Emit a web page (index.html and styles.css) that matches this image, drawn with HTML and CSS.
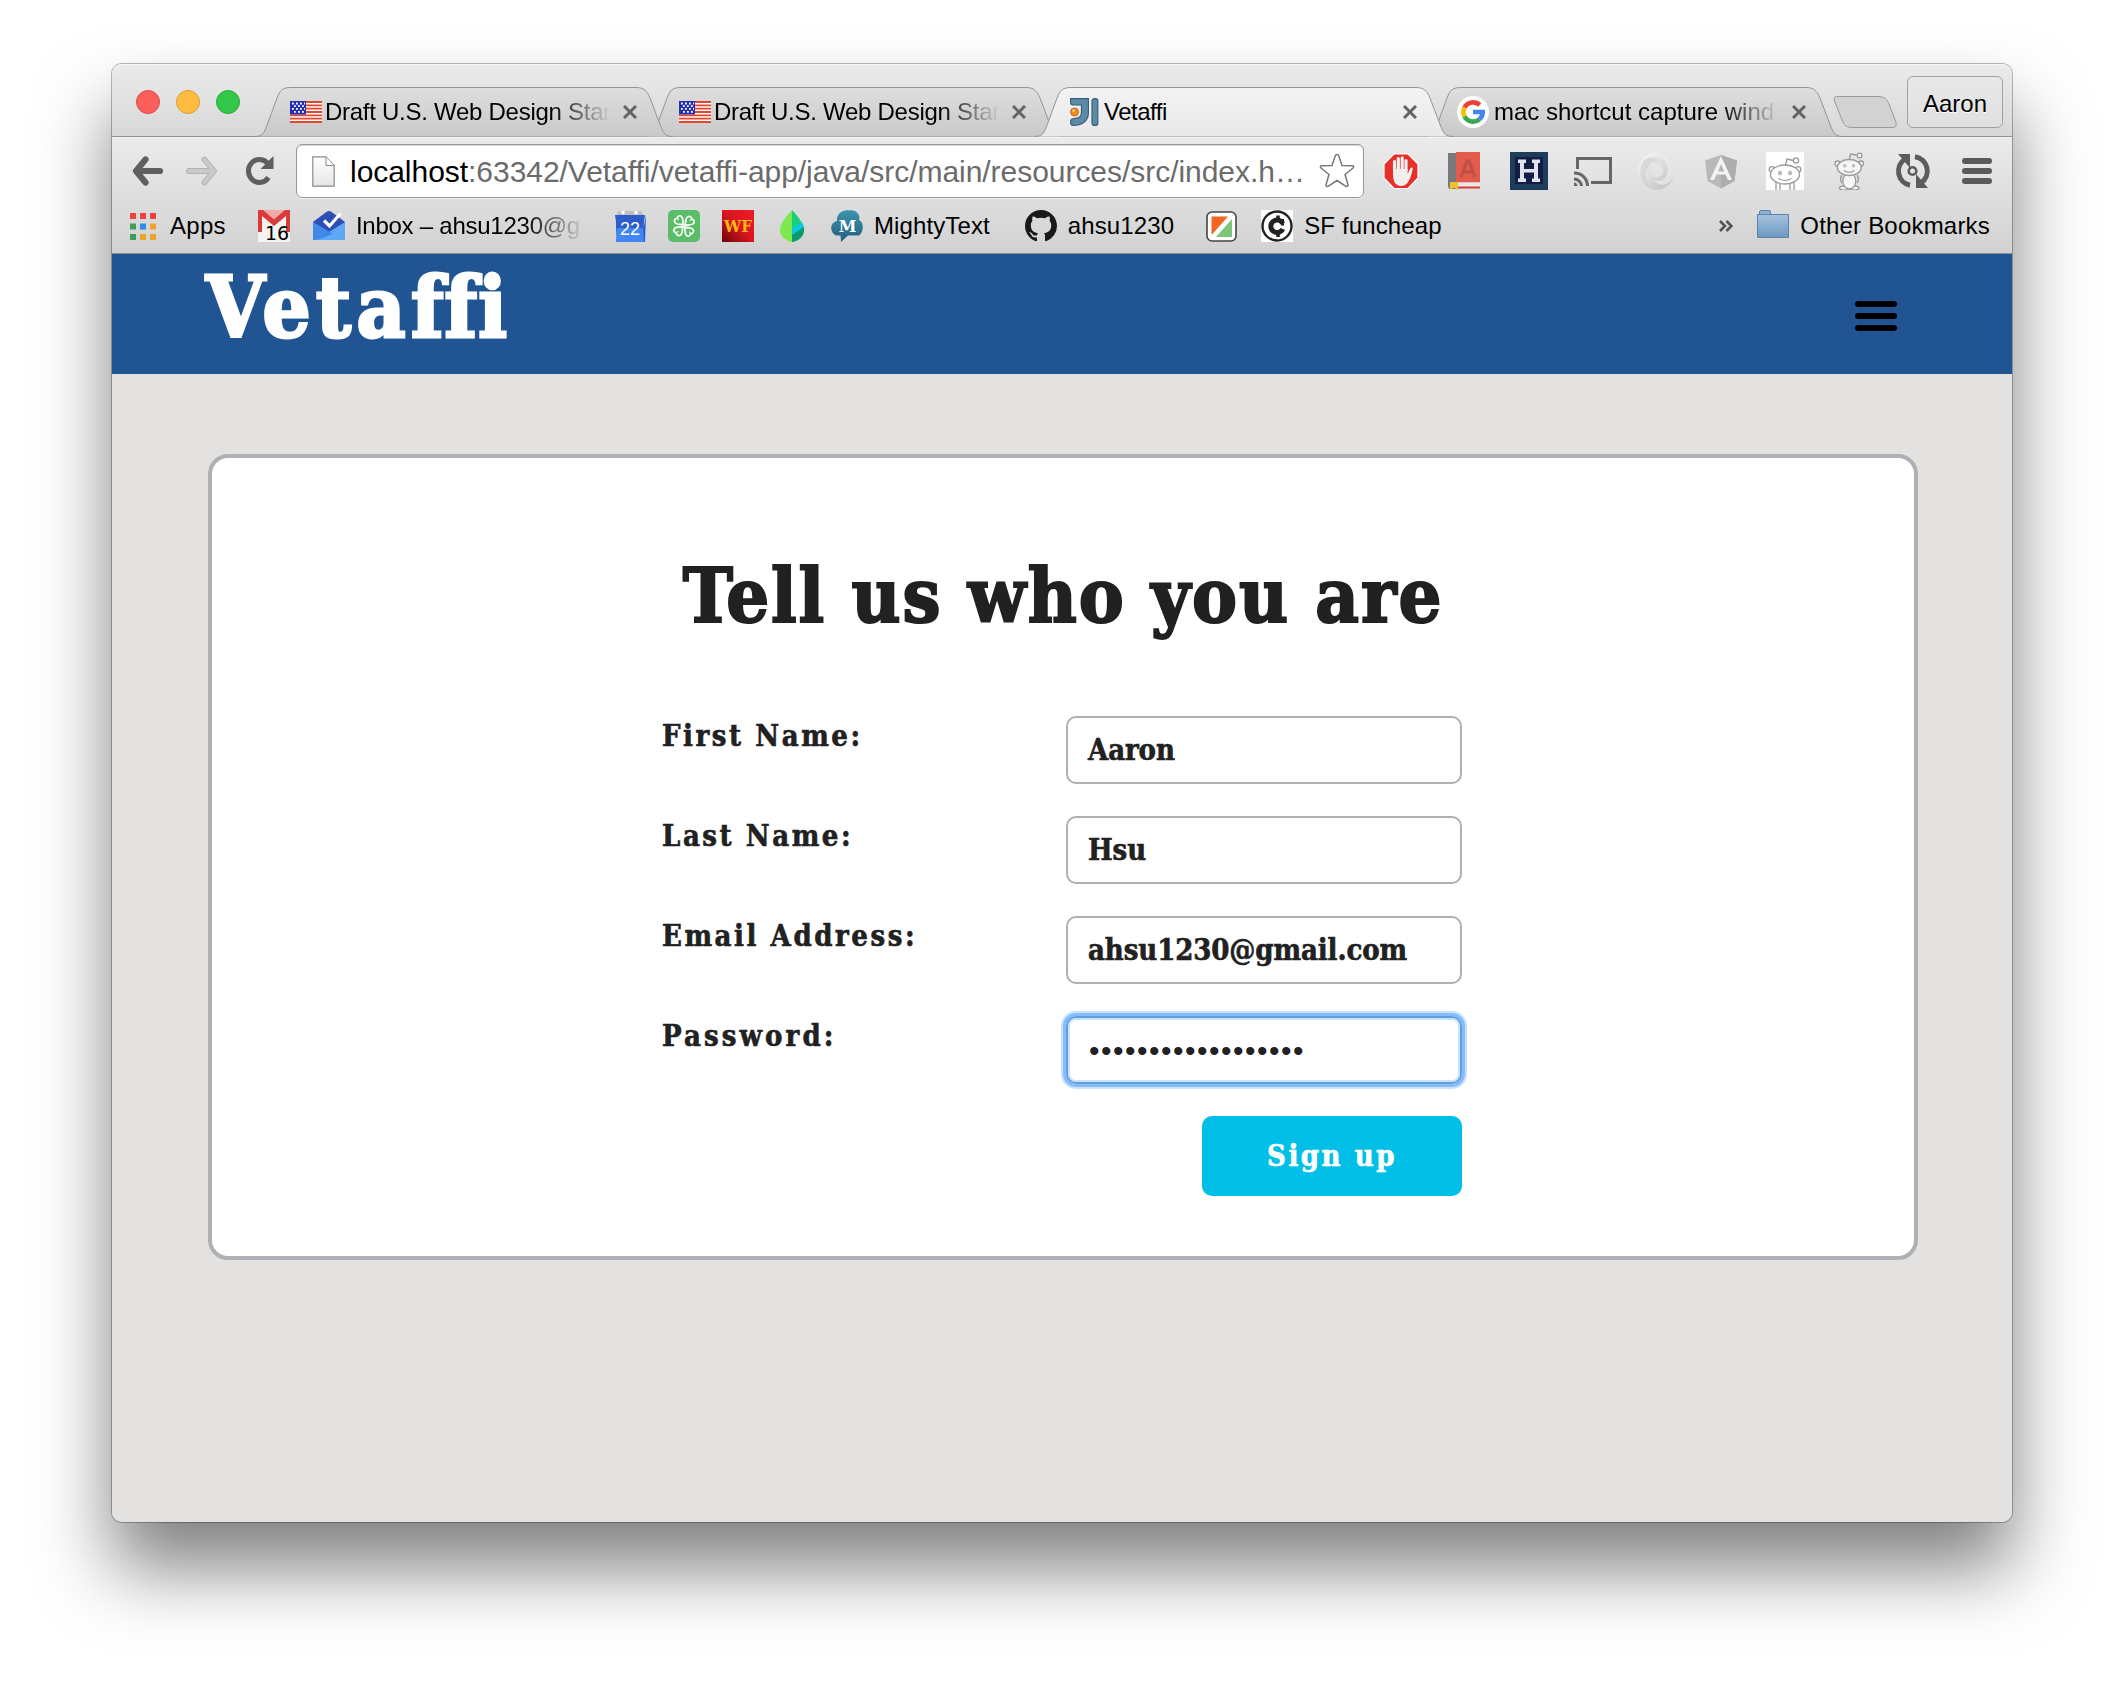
FILE: index.html
```
<!DOCTYPE html>
<html lang="en">
<head>
<meta charset="utf-8">
<title>Vetaffi</title>
<link rel="stylesheet" href="styles.css">
</head>
<body>
<svg class="defs" width="0" height="0" aria-hidden="true">
  <defs>
    <linearGradient id="tabFill" x1="0" y1="0" x2="0" y2="1"><stop offset="0" stop-color="#dedede"/><stop offset="1" stop-color="#c9c9ca"/></linearGradient>
    <linearGradient id="activeFill" x1="0" y1="0" x2="0" y2="1"><stop offset="0" stop-color="#f3f3f3"/><stop offset="1" stop-color="#e9e9e9"/></linearGradient>
    <linearGradient id="folderFill" x1="0" y1="0" x2="0" y2="1"><stop offset="0" stop-color="#a5c2dd"/><stop offset="1" stop-color="#6d99c4"/></linearGradient>
    <linearGradient id="wfFill" x1="1" y1="0" x2="0" y2="1"><stop offset="0" stop-color="#ee1c25"/><stop offset=".5" stop-color="#d8161f"/><stop offset="1" stop-color="#6d0208"/></linearGradient>
    <linearGradient id="cloudFill" x1="0" y1="0" x2="0" y2="1"><stop offset="0" stop-color="#3d93ad"/><stop offset="1" stop-color="#245d80"/></linearGradient>
    <linearGradient id="ringFill" x1="0" y1="0" x2="1" y2="1"><stop offset="0" stop-color="#f0f0f0"/><stop offset="1" stop-color="#c6c6c6"/></linearGradient>
    <linearGradient id="pageFill" x1="0" y1="0" x2="0" y2="1"><stop offset="0" stop-color="#fff"/><stop offset="1" stop-color="#e6e6e6"/></linearGradient>
    <symbol id="tabShape" viewBox="0 0 418 50"><path d="M0 49.500C7 49.500 9 46 11 41L22 11C25 3 28 .5 36 .5H381C389 .5 392 4 395 11L406 40C409 47 411 49.500 418 49.500"/></symbol>
    <symbol id="flag" viewBox="0 0 32 22"><path fill="#fff" d="M0 0h32v22H0z"/><path stroke="#e2462c" stroke-width="1.800" d="M0 1h32M0 4.400h32M0 7.700h32M0 11h32M0 14.400h32M0 17.700h32M0 21h32"/><path fill="#2430b0" d="M0 0h16v13.500H0z"/><path stroke="#fff" stroke-width="1.800" stroke-dasharray="1.800 2.200" d="M2 2.500h13M4 5.200h10M2 7.900h13M4 10.800h10"/></symbol>
    <symbol id="close" viewBox="0 0 14 14"><path stroke="#636363" stroke-width="3" d="M1 1l12 12M13 1L1 13"/></symbol>
  </defs>
</svg>

<div class="window">
  <header class="titlebar">
    <div class="lights"><i class="light red"></i><i class="light yellow"></i><i class="light green"></i></div>
    <div class="tabs">
      <div class="tab t1">
        <svg class="shape"><use href="#tabShape"/></svg>
        <svg class="fav" width="32" height="22"><use href="#flag"/></svg>
        <span class="title fade draft">Draft U.S. Web Design Stan</span>
        <svg class="x" width="14" height="14"><use href="#close"/></svg>
      </div>
      <div class="tab t2">
        <svg class="shape"><use href="#tabShape"/></svg>
        <svg class="fav" width="32" height="22"><use href="#flag"/></svg>
        <span class="title fade draft">Draft U.S. Web Design Stan</span>
        <svg class="x" width="14" height="14"><use href="#close"/></svg>
      </div>
      <div class="tab t3 active">
        <svg class="shape"><use href="#tabShape"/></svg>
        <svg class="fav" width="32" height="28" viewBox="0 0 32 28"><g fill="#5d8ba6" stroke="#38617c" stroke-width="1.200"><path d="M.6.600H18.400V15C18.400 23 12 27.400 3 27.400Q.6 27.400.6 24T4 20.500C9 20.500 11.500 18 11.500 14V7H3Q.6 7 .6 4z"/><rect x="22" y=".6" width="5.800" height="26.800" rx="2.500"/></g><circle cx="4.500" cy="14" r="4" fill="#f58a1f" stroke="#b65a10" stroke-width=".8"/><circle cx="3.500" cy="12.500" r="1.300" fill="#ffd08a"/></svg>
        <span class="title short">Vetaffi</span>
        <svg class="x" width="14" height="14"><use href="#close"/></svg>
      </div>
      <div class="tab t4">
        <svg class="shape"><use href="#tabShape"/></svg>
        <svg class="fav g" width="32" height="32" viewBox="0 0 32 32"><circle cx="16" cy="16" r="16" fill="#fff"/><g fill="none" stroke-width="4.600"><path stroke="#ea4335" d="M7.500 11.500A9.700 9.700 0 0 1 22.700 9"/><path stroke="#fbbc05" d="M7.500 20.500a9.700 9.700 0 0 1 0-9"/><path stroke="#34a853" d="M22.500 23.200A9.700 9.700 0 0 1 7.500 20.500"/><path stroke="#4285f4" d="M16 16H25.700A9.700 9.700 0 0 1 22.500 23.200"/></g></svg>
        <span class="title fade">mac shortcut capture wind</span>
        <svg class="x" width="14" height="14"><use href="#close"/></svg>
      </div>
    </div>
    <svg class="newtab" width="64" height="34" viewBox="0 0 64 34"><path fill="#d2d2d3" stroke="#9a9a9a" d="M4 1.500H45C51 1.500 54 4 56 9L62.500 26C64 30 63 32.500 60 32.500H19C13 32.500 11 30 9 25L1.500 6C.5 3 1.500 1.500 4 1.500z"/></svg>
    <div class="profile">Aaron</div>
  </header>

  <div class="chrome">
    <div class="toolbar">
      <svg class="back" width="32" height="30" viewBox="0 0 32 30"><path fill="none" stroke="#5f5f5f" stroke-width="6.200" stroke-linecap="round" stroke-linejoin="round" d="M13.500 3.500L4 15l9.500 11.500M5 15H28"/></svg>
      <svg class="fwd" width="32" height="30" viewBox="0 0 32 30"><path fill="none" stroke="#b3b3b3" stroke-width="5.800" stroke-linecap="round" stroke-linejoin="round" d="M18.500 3.500L28 15l-9.500 11.500M27 15H3"/><path fill="none" stroke="#c9c9c9" stroke-width="3.800" stroke-linecap="round" stroke-linejoin="round" d="M18.500 3.500L28 15l-9.500 11.500M27 15H3"/></svg>
      <svg class="reload" width="28" height="30" viewBox="0 0 28 30"><path fill="none" stroke="#5f5f5f" stroke-width="5" d="M22.500 21.500A11 11.500 0 1 1 21.500 7"/><path fill="#5f5f5f" d="M27.500 0V13H14.500z"/></svg>
      <div class="omnibox">
        <svg width="23" height="31" viewBox="0 0 23 31"><path fill="url(#pageFill)" stroke="#8a8a8a" stroke-width="1.200" d="M.8.800H14L22.200 9.500V30.200H.8z"/><path fill="#fff" stroke="#8a8a8a" d="M14 1V9.500H22"/></svg>
        <span class="url"><b>localhost</b>:63342/Vetaffi/vetaffi-app/java/src/main/resources/src/index.h…</span>
        <svg class="star" width="36" height="36" viewBox="0 0 36 36"><path fill="#fff" stroke="#777" stroke-width="1.500" stroke-linejoin="round" d="M18 1.500Q19.300 1.500 19.800 3L23 12.500 33.500 12.800Q35.500 13.300 34 15L26 21.500 29 31.700Q29 34 27 33.300L18 27.500 9 33.300Q6.800 34 7 31.700L10 21.500 2 15Q.5 13.300 2.500 12.800L13 12.500 16.200 3Q16.700 1.500 18 1.500z"/></svg>
      </div>
      <div class="exts">
        <svg viewBox="0 0 38 38"><path fill="#e8302a" stroke="#fff" stroke-width="1.200" d="M12 2H26L36 12V26L26 36.500H12L2 26V12z"/><path fill="none" stroke="#f8f4f3" stroke-width="3.100" stroke-linecap="round" d="M12.500 19V9.500M16.300 17V6.500M20.200 17V5.800M24 18V8.500"/><path fill="#f2eeee" d="M11 17h14.600v5l2.600-5.500c.8-1.600 3-1 2.500.8C29 24 27 34 19.500 34S11 27 11 22z"/></svg>
        <svg viewBox="1 0 38 38"><path fill="#77797c" d="M3 1H11V37H5Q3 37 3 33z"/><path fill="#e25b4c" d="M11 0H35V30.500H11z"/><path fill="#e8e8e8" d="M11 30.500H35V35H11z"/><path stroke="#dd3d30" stroke-width="2" d="M11 35.500H35"/><path fill="none" stroke="#c04f43" stroke-width="3" d="M16 25L22 9h2l6 16M18 20h10"/><path fill="#f2c230" d="M5 30h8v8l-4-2.500L5 38z"/></svg>
        <svg viewBox="0 0 38 38"><path fill="#1d3e5a" d="M0 0h38v38H0z"/><path fill="#131c44" d="M5 5h28v27H5z"/><path fill="#dfe3ee" d="M8 7.500h8v3.500h-2v6h10v-6h-2V7.500h8v3.500h-2v15.500h2V30h-8v-3.500h2V20.500h-10v6h2V30H8v-3.500h2V11H8z"/></svg>
        <svg viewBox="0 0 38 38"><g fill="none" stroke="#666" stroke-width="3"><path d="M3.500 17V6.500H36.500V30.500H17"/><path d="M0 21A13 13 0 0 1 13.500 34M0 27A7.500 7.500 0 0 1 7.500 34"/></g><path fill="#666" d="M0 30.500A4 4 0 0 1 3.500 34H0z"/></svg>
        <svg viewBox="0 0 38 38"><circle cx="19" cy="19" r="12.500" fill="none" stroke="url(#ringFill)" stroke-width="12.500"/><path fill="#cfcfcf" d="M5 9C-2 23 6 37 19 38C9 33 5 26 9 18C11 11 17 8 22 9C16 4 9 5 5 9z" opacity=".6"/><path fill="#f2f2f2" d="M13 1C25 3 32 12 29 22C27 29 22 30 16 28C22 36 32 33 36 24C34 31 27 37 19 38C30 37 38 29 38 19S29-1 13 1z" opacity=".6"/></svg>
        <svg viewBox="0 0 38 38"><path fill="#b9b9b9" d="M19 3L35 8.500 32.500 29 19 36.500 5.500 29 3 8.500z"/><path fill="#adadad" d="M19 3L35 8.500 32.500 29 19 36.500z"/><path fill="#f3f3f3" d="M19 4L30 28H26L23.500 22.500H14.500L12 28H8zM19 12L16 19.500H22z" fill-rule="evenodd"/></svg>
        <svg viewBox="0 0 38 38"><path fill="#fff" d="M0 0h38v38H0z"/><g fill="#fff" stroke="#999" stroke-width="1.300"><path d="M19.500 13L21 7l6.500 1.500" fill="none"/><circle cx="30" cy="8.500" r="2.600"/><circle cx="6" cy="17.500" r="2.800"/><circle cx="32" cy="17.500" r="2.800"/><path d="M10 38V29M28 38V29M14 38V32M24 38V32"/><ellipse cx="19" cy="22.500" rx="14.500" ry="9.500"/></g><path fill="none" stroke="#999" stroke-width="1.200" d="M12.500 26.500q6.500 4 13 0"/><circle cx="14" cy="21" r="2.200" fill="#bbb"/><circle cx="24" cy="21" r="2.200" fill="#bbb"/></svg>
        <svg viewBox="0 0 38 38"><g fill="#f5f5f5" stroke="#999" stroke-width="1.300"><path d="M19 9l1.500-7 6 1" fill="none"/><circle cx="29.500" cy="3.500" r="2.400"/><circle cx="7.500" cy="11.500" r="2.500"/><circle cx="31" cy="11.500" r="2.500"/><ellipse cx="14.500" cy="36" rx="5" ry="2"/><ellipse cx="24" cy="36" rx="5" ry="2"/><path fill="none" d="M12 23q-3 4 0 8M27 23q3 4 0 8"/><ellipse cx="19.300" cy="29" rx="6.500" ry="8"/><ellipse cx="19.300" cy="15.500" rx="12" ry="8"/></g><path fill="none" stroke="#999" stroke-width="1.200" d="M14 18.500q5 3.500 10.500 0"/><circle cx="14.800" cy="13.800" r="1.800" fill="#bbb"/><circle cx="23.500" cy="13.800" r="1.800" fill="#bbb"/></svg>
        <svg viewBox="0 0 38 38"><g fill="none" stroke="#5c5c5c" stroke-width="5"><path d="M16 33.300A14.500 14.500 0 0 1 11 7M21 4.700A14.500 14.500 0 0 1 27 31"/><circle cx="18.500" cy="19" r="3.800" stroke-width="2.600"/></g><path fill="#5c5c5c" d="M4 2H16V16zM34 36H22V22z"/></svg>
        <svg viewBox="0 0 38 38"><path stroke="#5a5a5a" stroke-width="6" stroke-linecap="round" d="M7 9H31M7 19H31M7 29H31"/></svg>
      </div>
    </div>

    <nav class="bookmarks">
      <svg class="bm apps" width="26" height="27" viewBox="0 0 26 27"><g><path fill="#f04040" d="M0 0h6v6H0zM10 0h6v6h-6zM20 0h6v6h-6z"/><path fill="#3e9c5c" d="M0 10.500h6v6H0zM0 21h6v6H0z"/><path fill="#2b8de8" d="M10 10.500h6v6h-6z"/><path fill="#eea329" d="M20 10.500h6v6h-6zM10 21h6v6h-6zM20 21h6v6h-6z"/></g></svg>
      <span class="bt">Apps</span>
      <svg class="bm gmail" width="32" height="32" viewBox="0 0 32 32"><path fill="#f5f2f2" d="M0 0h32v32H0z"/><path fill="#f3a9a6" d="M4 0h24v3L16 13 4 3z"/><path fill="#d93a3a" d="M0 0h5L16 9.500 27 0h5v22h-4V6L16 16 4 6V22H0z"/><text x="7" y="30" font-family="DejaVu Sans" font-size="19" textLength="24">16</text></svg>
      <svg class="bm inbox" width="32" height="32" viewBox="0 0 32 32"><path fill="#2d4fb5" d="M0 12L14 1.500Q16 .5 18 1.500L32 12V24H0z"/><path fill="#5fa8f5" d="M0 12L16 22 32 12V30H0z"/><path fill="#4287ea" d="M0 12L20 24 4 30H0z"/><path fill="none" stroke="#fff" stroke-width="3.200" d="M11 10.500L16.500 16 27.500 3.500"/></svg>
      <span class="bt fade inboxt">Inbox – ahsu1230@g</span>
      <svg class="bm cal" width="32" height="32" viewBox="0 0 32 32"><path fill="#bfbfbf" d="M3 5Q3 1 6 1H26Q29 1 29 5z"/><circle cx="9" cy="2.500" r="1.800" fill="#fff"/><circle cx="22" cy="2.500" r="1.800" fill="#fff"/><path fill="#2c5dcb" d="M2 5H30L29.500 18 32 5 31 32H3L2 18z"/><path fill="#2c5dcb" d="M1 5H31L29 18H3z"/><path fill="#4285f4" d="M3 18H29L30 32H2z"/><text x="16" y="24.500" text-anchor="middle" font-family="Liberation Sans" font-size="18" fill="#fff">22</text></svg>
      <svg class="bm clover" width="32" height="32" viewBox="0 0 32 32"><rect width="32" height="32" rx="5" fill="#5abd67"/><g fill="none" stroke="#fff" stroke-width="1.700"><path id="leaf" d="M15 15C13 14 7 15 6.500 11.500 6 8.500 9 8 9.500 8.500 9 6 12 5 13.500 6.500 15.500 8.500 15 12 15 15z"/><use href="#leaf" transform="rotate(90 16 16)"/><use href="#leaf" transform="rotate(180 16 16)"/><use href="#leaf" transform="rotate(270 16 16)"/></g></svg>
      <svg class="bm wf" width="32" height="32" viewBox="0 0 32 32"><path fill="url(#wfFill)" d="M0 0h32v32H0z"/><text x="2" y="21.500" font-family="DejaVu Serif" font-weight="bold" font-size="16" fill="#fdb813" textLength="28" lengthAdjust="spacingAndGlyphs">WF</text></svg>
      <svg class="bm mint" width="24" height="32" viewBox="0 0 24 32"><path fill="#7fe84e" d="M12 0C4 9 0 14 0 20S5 31 12 32z"/><path fill="#18cf7a" d="M12 0C20 9 24 14 24 20S19 31 12 32z"/><path fill="#0bc8e0" d="M12 19L22 12 24 17 12 25z"/><path fill="#0d9a6e" d="M12 25L24 17C25 26 19 31 12 32z"/></svg>
      <svg class="bm mighty" width="32" height="32" viewBox="0 0 32 32"><path fill="url(#cloudFill)" d="M6 11C5 4 12-1 18 .5 24-1 30 4 28 10 33 12 33 22 28 25.500H17L10 32 9.500 25.500H5C-1 23-2 13 6 11z"/><text x="16.500" y="22" text-anchor="middle" font-family="DejaVu Serif" font-weight="bold" font-size="16" fill="#fff">M</text></svg>
      <span class="bt">MightyText</span>
      <svg class="bm github" width="32" height="32" viewBox="0 0 16 16"><path fill="#1a1818" fill-rule="evenodd" d="M8 0C3.580 0 0 3.580 0 8c0 3.540 2.290 6.530 5.470 7.590.4.070.55-.17.55-.38 0-.19-.01-.82-.01-1.490-2.010.37-2.530-.49-2.690-.94-.09-.23-.48-.94-.82-1.130-.28-.15-.68-.52-.01-.53.63-.01 1.080.58 1.230.82.720 1.210 1.870.87 2.330.66.070-.52.280-.87.510-1.070-1.780-.2-3.640-.89-3.640-3.950 0-.87.310-1.590.82-2.150-.08-.2-.36-1.020.08-2.120 0 0 .67-.21 2.200.82.640-.18 1.320-.27 2-.27s1.360.09 2 .27c1.530-1.040 2.200-.82 2.200-.82.440 1.100.160 1.920.080 2.120.510.560.820 1.270.820 2.150 0 3.070-1.870 3.750-3.650 3.950.290.250.540.730.540 1.480 0 1.070-.01 1.930-.01 2.200 0 .21.150.46.550.38A8.010 8.010 0 0 0 16 8c0-4.420-3.580-8-8-8z"/></svg>
      <span class="bt">ahsu1230</span>
      <svg class="bm zz" width="31" height="31" viewBox="0 0 31 31"><rect x="1" y="1" width="29" height="29" rx="5" fill="#fff" stroke="#444" stroke-width="1.600"/><path fill="#f26522" d="M5.500 5.500H22L5.500 24z"/><path fill="#7dc577" d="M26 8V26H10z"/></svg>
      <svg class="bm cheap" width="32" height="32" viewBox="0 0 32 32"><path fill="#fff" d="M0 0h32v32H0z"/><circle cx="16" cy="16" r="14.500" fill="none" stroke="#222" stroke-width="2.400"/><path fill="none" stroke="#222" stroke-width="5" d="M21.800 13.500A6.300 6.300 0 1 0 21.800 19"/><path stroke="#222" stroke-width="3.500" d="M17 5.500V9M17 23.500V27"/><path fill="#222" d="M20 9h3v6.500h-3z"/></svg>
      <span class="bt">SF funcheap</span>
      <span class="spacer"></span>
      <svg class="chev" width="14" height="12" viewBox="0 0 14 12"><path fill="none" stroke="#555" stroke-width="2.500" d="M1 1l5 5-5 5M7.500 1l5 5-5 5"/></svg>
      <svg class="folder" width="32" height="28" viewBox="0 0 32 28"><path fill="#8fb0cf" stroke="#5b82a8" d="M2.500 5V2Q2.500.5 4 .5H12Q13.500.5 13.500 2V5z"/><path fill="url(#folderFill)" stroke="#5b82a8" d="M.5 4.500H31.500V27.500H.5z"/></svg>
      <span class="bt other">Other Bookmarks</span>
    </nav>
  </div>

  <main class="page">
    <div class="nav">
      <div class="brand">Veta<span class="tight">ffi</span></div>
      <div class="burger"><i></i><i></i><i></i></div>
    </div>
    <section class="card">
      <h1>Tell us who you are</h1>
      <form class="form">
        <div class="row"><label>First Name:</label><div class="field">Aaron</div></div>
        <div class="row"><label>Last Name:</label><div class="field">Hsu</div></div>
        <div class="row"><label>Email Address:</label><div class="field">ahsu1230@gmail.com</div></div>
        <div class="row"><label class="wide">Password:</label><div class="field focus"><span class="dots">••••••••••••••••••</span></div></div>
        <button type="button" class="submit">Sign up</button>
      </form>
    </section>
  </main>
</div>
</body>
</html>
```
FILE: styles.css
```
* { box-sizing: border-box; }
body {
  margin: 0;
  height: 1682px;
  padding: 64px 112px 0;
  overflow: hidden;
  background: #fff;
  font-family: "Liberation Sans", Arial, sans-serif;
  font-size: 24px;
  color: #000;
}
svg { display: block; flex: none; }
.defs { position: absolute; }

.window {
  width: 1900px;
  height: 1458px;
  display: flex;
  flex-direction: column;
  border-radius: 10px;
  box-shadow: 0 0 0 1px rgba(0, 0, 0, .27), 0 46px 74px rgba(0, 0, 0, .5);
}

/* Title bar and tabs */
.titlebar {
  height: 73px;
  display: flex;
  align-items: flex-end;
  border-radius: 10px 10px 0 0;
  border-bottom: 1px solid #929292;
  background: linear-gradient(#ebebeb, #d8d8d8);
  box-shadow: inset 0 1px 0 #f6f6f6;
}
.lights { display: flex; gap: 16px; padding: 0 0 22px 24px; width: 143px; }
.light { width: 24px; height: 24px; border-radius: 50%; border: 1px solid; }
.red { background: #fc605b; border-color: #e04744; }
.yellow { background: #fdbc40; border-color: #de9f34; }
.green { background: #34c84a; border-color: #27aa35; }
.tabs { display: flex; margin-bottom: -1px; }
.tab {
  position: relative;
  display: flex;
  align-items: center;
  width: 418px;
  height: 50px;
  padding-left: 35px;
}
.tab + .tab { margin-left: -28px; }
.t1 { z-index: 3; }
.t2 { z-index: 2; }
.t3 { z-index: 4; }
.t4 { z-index: 1; }
.shape {
  position: absolute;
  left: 0;
  top: 0;
  z-index: -1;
  width: 418px;
  height: 50px;
  fill: url(#tabFill);
  stroke: #949494;
}
.active .shape { fill: url(#activeFill); }
.fav { margin-right: 3px; }
.t2 .fav { margin-left: -1px; }
.fav.g { margin-left: -3px; margin-right: 5px; }
.title { flex: none; width: 286px; margin-right: 12px; white-space: nowrap; line-height: 30px; }
.title.draft { letter-spacing: -.27px; }
.title.short { letter-spacing: -.5px; padding-left: 0; margin-left: -1px; width: 287px; }
.fade {
  -webkit-mask-image: linear-gradient(90deg, #000 calc(100% - 60px), transparent 100%);
  mask-image: linear-gradient(90deg, #000 calc(100% - 60px), transparent 100%);
}
.newtab { margin: 0 0 7px -10px; }
.profile {
  width: 96px;
  height: 52px;
  margin: 0 0 8px 10px;
  border: 1px solid #a2a2a2;
  border-radius: 6px;
  line-height: 53px;
  text-align: center;
  text-shadow: 0 1px 0 #fff;
  background: linear-gradient(#e8e8e8, #e0e0e0);
}

/* Toolbar */
.chrome {
  height: 117px;
  border-bottom: 1px solid #8d8d8d;
  background: linear-gradient(#ebebeb, #d2d2d2);
  box-shadow: inset 0 1px 0 #f4f4f4;
}
.toolbar { height: 68px; display: flex; align-items: center; padding-left: 20px; }
.fwd { margin-left: 22px; }
.reload { margin-left: 28px; }
.omnibox {
  width: 1068px;
  height: 54px;
  margin-left: 22px;
  padding: 0 8px 0 15px;
  display: flex;
  align-items: center;
  border: 1px solid #999;
  border-radius: 6px;
  background: #fff;
  box-shadow: inset 0 1px 1px rgba(0, 0, 0, .15), 0 1px 0 #eee;
}
.url { margin-left: 15px; padding-top: 2px; font-size: 30px; letter-spacing: -.04px; color: #6b6b6b; white-space: nowrap; }
.url b { font-weight: 400; color: #000; }
.star { margin-left: auto; }
.exts { display: flex; gap: 26px; margin-left: 18px; }
.exts svg { width: 38px; height: 38px; }

/* Bookmarks */
.bookmarks { height: 42px; display: flex; align-items: center; padding: 0 22px 0 18px; }
.bt { line-height: 30px; white-space: nowrap; letter-spacing: .12px; }
.bm + .bt { margin-left: 11px; }
.apps + .bt { margin-left: 14px; letter-spacing: .3px; }
.gmail { margin-left: 32px; }
.inbox { margin-left: 23px; }
.bm + .inboxt { width: 229px; letter-spacing: -.25px; }
.cal { margin-left: 29px; }
.clover, .wf { margin-left: 22px; }
.mint { margin-left: 26px; }
.mighty { margin-left: 27px; }
.github { margin-left: 35px; }
.zz { margin-left: 32px; }
.cheap { margin-left: 24px; }
.spacer { flex: 1; }
.folder { margin: 0 11px 4px 24px; }
.bt.other { letter-spacing: .2px; }

/* Page */
.page { flex: 1; background: #e3e2e0; border-radius: 0 0 10px 10px; }
.nav {
  height: 120px;
  padding: 0 115px 0 94px;
  display: flex;
  justify-content: space-between;
  align-items: center;
  background: #205493;
}
.brand, .card { font-family: "DejaVu Serif Condensed", "DejaVu Serif", serif; font-stretch: condensed; font-weight: bold; }
.brand {
  padding-bottom: 13px;
  font-size: 84px;
  line-height: 90px;
  letter-spacing: 5.500px;
  color: #fff;
  -webkit-text-stroke: 3px #fff;
}
.tight { letter-spacing: 1.200px; }
.burger { display: flex; flex-direction: column; gap: 6px; width: 42px; padding-top: 4px; }
.burger i { height: 6px; border-radius: 3px; background: #000; }
.card {
  width: 1710px;
  height: 806px;
  margin: 80px 0 0 96px;
  padding-top: 90px;
  border: 4px solid #aeb0b5;
  border-radius: 20px;
  background: #fff;
  color: #212121;
}
h1 {
  margin: 0 0 72px;
  font-size: 75px;
  line-height: 96px;
  letter-spacing: 1.900px;
  text-align: center;
  -webkit-text-stroke: 2px #212121;
}
.form { display: flex; flex-direction: column; gap: 32px; width: 800px; margin-left: 450px; -webkit-text-stroke: .6px; }
.row { display: flex; justify-content: space-between; height: 68px; }
label { font-size: 29px; line-height: 40px; letter-spacing: 2.550px; }
.wide { letter-spacing: 3.100px; }
.field {
  width: 396px;
  height: 68px;
  padding-left: 20px;
  border: 2px solid #aeb0b5;
  border-radius: 10px;
  font-size: 29px;
  line-height: 64px;
  letter-spacing: -.1px;
}
.field.focus {
  padding-left: 21px;
  line-height: 66px;
  border-color: #629fe2;
  box-shadow: 0 0 0 3px #85bdfb, 0 0 0 5px #c9e2fd, inset 0 0 0 2px #c9e2fd;
}
.dots { font-family: "Liberation Sans", Arial, sans-serif; font-weight: 400; font-size: 30px; letter-spacing: 1.500px; -webkit-text-stroke: 0; }
.submit {
  align-self: flex-end;
  width: 260px;
  height: 80px;
  padding: 0;
  border: 0;
  border-radius: 10px;
  background: #02bfe7;
  color: #fff;
  font: inherit;
  font-size: 29px;
  letter-spacing: 2.500px;
  -webkit-text-stroke: .6px #fff;
}
```
